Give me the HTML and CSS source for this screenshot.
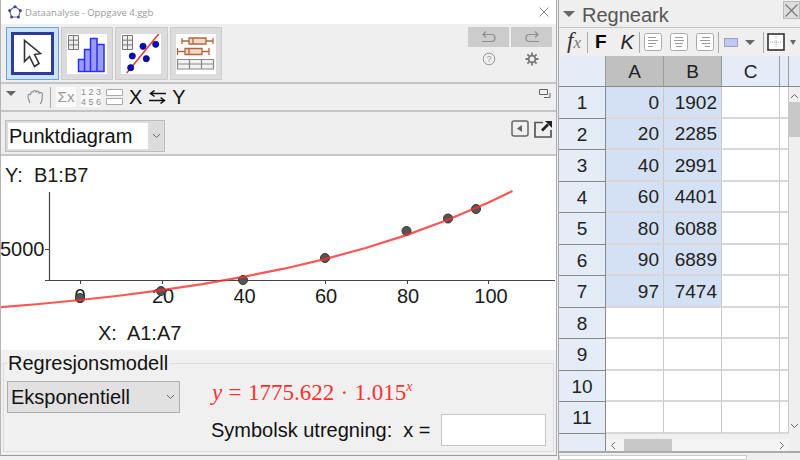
FILE: index.html
```html
<!DOCTYPE html>
<html lang="en">
  <head>
    <meta charset="utf-8">
    <title>Dataanalyse - Oppgave 4.ggb</title>
    <link rel="stylesheet" href="styles.css">
  </head>
  <body>
    <div class="desktop">
      <div class="analysis">
        <div class="titlebar">
          <svg class="logo" width="14" height="14" viewBox="0 0 14 14">
            <path d="M7 1.500 12.500 5.500 10.500 12 3.500 12 1.500 5.500Z" fill="none" stroke="#6b6f9e" stroke-width="1.200"/>
            <circle cx="7" cy="1.800" r="1.500" fill="#3f4482"/><circle cx="12.300" cy="5.500" r="1.500" fill="#3f4482"/>
            <circle cx="10.400" cy="12" r="1.500" fill="#3f4482"/><circle cx="3.600" cy="12" r="1.500" fill="#3f4482"/>
            <circle cx="1.700" cy="5.500" r="1.500" fill="#3f4482"/>
          </svg>
          <span class="title-text">Dataanalyse - Oppgave 4.ggb</span>
          <svg class="title-close" width="10" height="10" viewBox="0 0 10 10"><path d="M.5.5 9.500 9.500M9.500.5.5 9.500" stroke="#8a8a8a" fill="none"/></svg>
        </div>

        <div class="toolbar">
          <div class="tool tool-active">
            <div class="tool-frame">
              <svg width="36" height="36" viewBox="0 0 36 36"><path d="M10.500 4.500V25.500L15.500 20.500 20.500 30.500 25 27.500 20.500 18.500 26.500 17.500Z" fill="#fff" stroke="#333" stroke-width="1.600"/></svg>
            </div>
          </div>
          <div class="tool">
            <svg class="tool-icon" width="40" height="40" viewBox="0 0 40 40">
              <path d="M1.500 1.500H11.500V15.500H1.500ZM6.500 1.500V15.500M1.500 6.200H11.500M1.500 10.900H11.500" fill="#eee" stroke="#777"/>
              <path d="M11.500 25.500H17.500V37.500H11.500ZM17.500 15.500H23.500V37.500H17.500ZM23.500 4.500H30V37.500H23.500ZM30 10.500H37V37.500H30Z" fill="#9a9cf5" stroke="#2a30f0" stroke-width="1.500"/>
            </svg>
          </div>
          <div class="tool">
            <svg class="tool-icon" width="40" height="40" viewBox="0 0 40 40">
              <path d="M1.500 1.500H11.500V15.500H1.500ZM6.500 1.500V15.500M1.500 6.200H11.500M1.500 10.900H11.500" fill="#eee" stroke="#777"/>
              <path d="M5.700 39 37.700 0" stroke="#ee3333" stroke-width="1.500"/>
              <g fill="#0707d0" stroke="#111144" stroke-width=".8">
                <circle cx="9.700" cy="33.700" r="3.100"/><circle cx="11.300" cy="22" r="3.100"/>
                <circle cx="22" cy="12.300" r="3.100"/><circle cx="25.300" cy="24.700" r="3.100"/>
                <circle cx="34.700" cy="10.300" r="3.100"/>
              </g>
            </svg>
          </div>
          <div class="tool">
            <svg class="tool-icon" width="40" height="40" viewBox="0 0 40 40">
              <g fill="#eedacd" stroke="#b5653a" stroke-width="1.300">
                <path d="M6 4V10M6 7H13M30 7H37M37 4V10"/>
                <path d="M13 4H30V10H13ZM17 4V10"/>
                <path d="M1.500 14V21M1.500 17.500H9M26 17.500H33M33 14V21"/>
                <path d="M9 14.500H26V20.500H9ZM13 14.500V20.500"/>
              </g>
              <path d="M1.500 25.500H37.500V35H1.500ZM1.500 30H37.500M13.500 25.500V35M25.500 25.500V35" fill="#f2f2f2" stroke="#888" stroke-width="1.200"/>
            </svg>
          </div>
          <div class="undo-group">
            <div class="undo-row">
              <div class="undo-btn">
                <svg width="16" height="14" viewBox="0 0 16 14"><path d="M1 11.500H10.500A3.500 3.500 0 0 0 10.500 4.500H2M5 1.500 2 4.500 5 7.500" fill="none" stroke="#8e8e8e" stroke-width="1.200"/></svg>
              </div>
              <div class="undo-btn">
                <svg width="16" height="14" viewBox="0 0 16 14"><path d="M15 11.500H5.500A3.500 3.500 0 0 1 5.500 4.500H14M11 1.500 14 4.500 11 7.500" fill="none" stroke="#8e8e8e" stroke-width="1.200"/></svg>
              </div>
            </div>
            <div class="undo-row">
              <div class="undo-sub">
                <svg width="14" height="14" viewBox="0 0 14 14"><circle cx="7" cy="7" r="5.800" fill="none" stroke="#999"/><text x="7" y="10.200" class="help-mark">?</text></svg>
              </div>
              <div class="undo-sub">
                <svg width="14" height="14" viewBox="0 0 14 14"><circle cx="7" cy="7" r="3.400" fill="none" stroke="#777" stroke-width="1.800"/><path d="M7 .5V3M7 11V13.500M.5 7H3M11 7H13.500M2.400 2.400 4.200 4.200M9.800 9.800 11.600 11.600M2.400 11.600 4.200 9.800M9.800 4.200 11.600 2.400" stroke="#777" stroke-width="1.800"/></svg>
              </div>
            </div>
          </div>
        </div>

        <div class="optionbar">
          <span class="tri-down"></span>
          <svg class="opt-hand" width="18" height="16" viewBox="0 0 18 16"><path d="M3 14C2 11 .5 8 1 6.500 1.500 5 3 5 3.500 6 3.500 3.500 5 2 6 3 6.500 1 8.500 1 9 3 10 1.500 12 2 12 4 13 3 15.500 3.500 15.500 5.500L15 11 13.500 15" fill="none" stroke="#888" stroke-width="1.100"/></svg>
          <span class="opt-sep"></span>
          <span class="opt-sum">&Sigma;x</span>
          <span class="opt-nums">1 2 3<br>4 5 6</span>
          <svg class="opt-rows" width="19" height="18" viewBox="0 0 19 18"><path d="M1.500 1.500H17.500V7.500H1.500ZM1.500 10.500H17.500V16.500H1.500Z" fill="#fff" stroke="#aaa"/></svg>
          <span class="opt-xy">X</span>
          <svg class="opt-swap" width="17" height="14" viewBox="0 0 17 14"><path d="M17 3.500H2M5.500 .5 1.500 3.500 5.500 6.500M0 10.500H15M11.500 7.500 15.500 10.500 11.500 13.500" fill="none" stroke="#111" stroke-width="1.500"/></svg>
          <span class="opt-xy">Y</span>
          <svg class="opt-detach" width="12" height="10" viewBox="0 0 12 10"><path d="M.5.5H8.500V5.500H.5Z" fill="none" stroke="#666"/><path d="M11 4V8.500H5" fill="none" stroke="#666"/></svg>
        </div>

        <div class="chartbar">
          <div class="combo">
            <span class="combo-value">Punktdiagram</span>
            <span class="combo-arrow"><svg width="9" height="6" viewBox="0 0 9 6"><path d="M1 1 4.500 4.500 8 1" fill="none" stroke="#666"/></svg></span>
          </div>
          <div class="chart-actions">
            <svg width="18" height="17" viewBox="0 0 18 17"><rect x="1" y="1" width="16" height="15" rx="2" fill="#f0f0f0" stroke="#666" stroke-width="1.500"/><path d="M11 5V12L6 8.500Z" fill="#666"/></svg>
            <svg width="19" height="18" viewBox="0 0 19 18"><path d="M9 2.500H1V17H17V10" fill="none" stroke="#555" stroke-width="1.700"/><path d="M8 10.500 14 4.500" stroke="#222" stroke-width="2.600"/><path d="M11 1H18V8Z" fill="#222"/></svg>
          </div>
        </div>

        <svg class="plot" width="555" height="194" viewBox="1 156 555 194">
          <text x="5" y="182" class="plot-label">Y:&nbsp; B1:B7</text>
          <path d="M49.500 192V280.500M45 280.500H555M45 249.500H49.500" fill="none" stroke="#444" stroke-width="1.200"/>
          <path d="M80.500 280V284M162.500 280V284M244.500 280V284M325.500 280V284M407.500 280V284M488.500 280V284" stroke="#444"/>
          <text x="0" y="256" class="plot-label">5000</text>
          <text x="80" y="303" class="tick">0</text>
          <text x="163" y="303" class="tick">20</text>
          <text x="244.500" y="303" class="tick">40</text>
          <text x="326" y="303" class="tick">60</text>
          <text x="408" y="303" class="tick">80</text>
          <text x="491" y="303" class="tick">100</text>
          <g fill="#555" stroke="#333">
            <circle cx="80" cy="298" r="4.500"/><circle cx="161" cy="291" r="4.500"/>
            <circle cx="243" cy="280" r="4.500"/><circle cx="325" cy="258" r="4.500"/>
            <circle cx="406.500" cy="231" r="4.500"/><circle cx="448" cy="218.500" r="4.500"/>
            <circle cx="476" cy="209" r="4.500"/>
          </g>
          <polyline class="curve" points="0,307.200 39.200,304 80,300 120.800,295.500 161.600,290.200 202.400,284.100 243.200,276.900 284,268.700 324.800,259.100 365.600,248 406.400,235.100 447.200,220.100 488,202.700 512.500,191"/>
          <text x="98" y="340" class="plot-label">X:&nbsp; A1:A7</text>
        </svg>

        <fieldset class="model">
          <legend>Regresjonsmodell</legend>
          <div class="model-grid">
            <div class="model-select">
              <span>Eksponentiell</span>
              <svg width="9" height="6" viewBox="0 0 9 6"><path d="M1 1 4.500 4.500 8 1" fill="none" stroke="#666"/></svg>
            </div>
            <div class="formula"><i>y</i> = 1775.622 &middot; 1.015<sup>x</sup></div>
            <div class="symbolic">
              <span>Symbolsk utregning:&nbsp; x =</span>
              <div class="symbolic-input"></div>
            </div>
          </div>
        </fieldset>
      </div>

      <div class="sheet">
        <div class="sheet-head">
          <span class="tri-down tri-head"></span>
          <span class="sheet-title">Regneark</span>
          <div class="sheet-close"><svg width="13" height="13" viewBox="0 0 13 13"><path d="M.5.5 12.500 12.500M12.500.5.5 12.500" stroke="#777" fill="none" stroke-width="1.200"/></svg></div>
        </div>
        <div class="sheet-tools">
          <span class="fx"><i>f</i><i class="fx-x">x</i></span>
          <span class="tool-sep"></span>
          <b class="bold-btn">F</b>
          <i class="ital-btn">K</i>
          <span class="tool-sep"></span>
          <svg class="align" width="18" height="18" viewBox="0 0 18 18"><rect x=".5" y=".5" width="17" height="17" rx="2" fill="#fff" stroke="#aaa"/><path d="M4 4.500H12M4 7.500H14M4 10.500H12M4 13.500H9" stroke="#999"/></svg>
          <svg class="align" width="18" height="18" viewBox="0 0 18 18"><rect x=".5" y=".5" width="17" height="17" rx="2" fill="#fff" stroke="#aaa"/><path d="M5 4.500H13M4 7.500H14M5 10.500H13M6 13.500H12" stroke="#999"/></svg>
          <svg class="align" width="18" height="18" viewBox="0 0 18 18"><rect x=".5" y=".5" width="17" height="17" rx="2" fill="#fff" stroke="#aaa"/><path d="M6 4.500H14M4 7.500H14M6 10.500H14M9 13.500H14" stroke="#999"/></svg>
          <span class="tool-sep"></span>
          <span class="swatch"></span>
          <span class="tri-small"></span>
          <span class="tool-sep"></span>
          <svg class="border-btn" width="18" height="18" viewBox="0 0 18 18"><rect x="1" y="1" width="16" height="16" fill="#fff" stroke="#333" stroke-width="1.600"/><path d="M9 3V15M3 9H15" stroke="#aaa" stroke-dasharray="1 1"/></svg>
          <span class="tri-tiny"></span>
        </div>
        <div class="sheet-body">
          <div class="grid">
            <div class="head corner"></div><div class="head sel">A</div><div class="head sel">B</div><div class="head">C</div><div class="head"></div>
            <div class="row-no">1</div><div class="cell hit">0</div><div class="cell hit">1902</div><div class="cell"></div><div class="cell"></div>
            <div class="row-no">2</div><div class="cell hit">20</div><div class="cell hit">2285</div><div class="cell"></div><div class="cell"></div>
            <div class="row-no">3</div><div class="cell hit">40</div><div class="cell hit">2991</div><div class="cell"></div><div class="cell"></div>
            <div class="row-no">4</div><div class="cell hit">60</div><div class="cell hit">4401</div><div class="cell"></div><div class="cell"></div>
            <div class="row-no">5</div><div class="cell hit">80</div><div class="cell hit">6088</div><div class="cell"></div><div class="cell"></div>
            <div class="row-no">6</div><div class="cell hit">90</div><div class="cell hit">6889</div><div class="cell"></div><div class="cell"></div>
            <div class="row-no">7</div><div class="cell hit">97</div><div class="cell hit">7474</div><div class="cell"></div><div class="cell"></div>
            <div class="row-no">8</div><div class="cell"></div><div class="cell"></div><div class="cell"></div><div class="cell"></div>
            <div class="row-no">9</div><div class="cell"></div><div class="cell"></div><div class="cell"></div><div class="cell"></div>
            <div class="row-no">10</div><div class="cell"></div><div class="cell"></div><div class="cell"></div><div class="cell"></div>
            <div class="row-no">11</div><div class="cell"></div><div class="cell"></div><div class="cell"></div><div class="cell"></div>
          </div>
          <div class="vscroll">
            <div class="vhead"></div>
            <svg class="vup" width="9" height="6" viewBox="0 0 9 6"><path d="M1 5 4.500 1.500 8 5" fill="none" stroke="#666"/></svg>
            <div class="vthumb"></div>
            <svg class="vdown" width="9" height="6" viewBox="0 0 9 6"><path d="M1 1 4.500 4.500 8 1" fill="none" stroke="#666"/></svg>
          </div>
        </div>
        <div class="sheet-foot">
          <div class="foot-corner"></div>
          <div class="hscroll">
            <svg width="6" height="9" viewBox="0 0 6 9"><path d="M5 1 1.500 4.500 5 8" fill="none" stroke="#666"/></svg>
            <div class="hthumb"></div>
            <svg class="hright" width="6" height="9" viewBox="0 0 6 9"><path d="M1 1 4.500 4.500 1 8" fill="none" stroke="#666"/></svg>
          </div>
        </div>
        <div class="inputbar"></div>
      </div>
    </div>
  </body>
</html>
```

FILE: styles.css
```css
html, body {
  margin: 0;
  width: 800px;
  height: 460px;
  overflow: hidden;
  background: #f0f0f0;
}

* {
  box-sizing: border-box;
}

.desktop {
  display: flex;
  width: 800px;
  height: 460px;
  font-family: "Liberation Sans", Arial, sans-serif;
  color: #111;
}

/* venstre vindu */
.analysis {
  width: 557px;
  height: 456px;
  border-left: 1px solid #b4b4b4;
  border-right: 1px solid #aaa;
  border-bottom: 1px solid #999;
  background: #f0f0f0;
  display: flex;
  flex-direction: column;
}

.titlebar {
  display: flex;
  align-items: center;
  height: 24px;
  padding: 0 7px 0 7px;
  background: #fff;
}

.title-text {
  margin-left: 3px;
  font-family: "Open Sans", sans-serif;
  font-size: 9.500px;
  color: #9a9a9a;
}

.title-close {
  margin-left: auto;
}

.toolbar {
  display: flex;
  height: 60px;
  padding: 3px 4px 0 5px;
  border-bottom: 2px solid #c4c4c4;
  background: #efefef;
}

.tool {
  display: flex;
  align-items: center;
  justify-content: center;
  width: 52.500px;
  height: 53px;
  margin-right: 2px;
  background: #dcdcdc;
  border: 1px solid #cbcbcb;
}

.tool-icon {
  background: #fff;
}

.tool-active {
  background: #cce4f7;
  border-color: #6fa3d0;
}

.tool-frame {
  display: flex;
  align-items: center;
  justify-content: center;
  width: 43px;
  height: 43px;
  background: #fff;
  border: 3px solid #2f3a9e;
}

.undo-group {
  margin-left: auto;
  width: 84px;
}

.undo-row {
  display: flex;
  gap: 2px;
}

.undo-btn {
  display: flex;
  align-items: center;
  justify-content: center;
  width: 41px;
  height: 20px;
  background: #cccccc;
}

.undo-sub {
  display: flex;
  align-items: center;
  justify-content: center;
  width: 41px;
  height: 24px;
}

.help-mark {
  font-size: 9px;
  fill: #999;
  text-anchor: middle;
}

.optionbar {
  display: flex;
  align-items: center;
  height: 28px;
  padding: 0 5px;
  border-bottom: 2px solid #c4c4c4;
  background: #efefef;
}

.tri-down {
  width: 0;
  height: 0;
  margin-bottom: 8px;
  border-left: 5px solid transparent;
  border-right: 5px solid transparent;
  border-top: 5px solid #666;
}

.opt-hand {
  margin-left: 11px;
}

.opt-sep {
  width: 1px;
  height: 21px;
  margin-left: 5px;
  background: #aaa;
}

.opt-sum {
  width: 20px;
  margin-left: 5px;
  font-size: 15px;
  background: #fafafa;
  color: #999;
  text-align: center;
  line-height: 20px;
}

.opt-nums {
  width: 20px;
  margin-left: 5px;
  font-size: 9px;
  line-height: 10px;
  background: #fafafa;
  color: #8a8a8a;
  text-align: center;
  white-space: nowrap;
}

.opt-rows {
  margin-left: 4px;
}

.opt-xy {
  margin-left: 5px;
  font-size: 20px;
  line-height: 20px;
  color: #111;
}

.opt-swap {
  margin-left: 7px;
  margin-right: 1px;
}

.opt-detach {
  margin-left: auto;
  margin-bottom: 6px;
}

.chartbar {
  display: flex;
  height: 44px;
  padding: 8px 3px 0 4px;
  border-bottom: 2px solid #c8c8c8;
  background: #efefef;
}

.combo {
  display: flex;
  width: 160px;
  height: 32px;
  background: #dcdcdc;
  border: 1px solid #bcbcbc;
  padding: 2px 0 2px 2px;
}

.combo-value {
  width: 140px;
  padding-left: 1px;
  background: #fff;
  font-size: 20px;
  line-height: 26px;
}

.combo-arrow {
  display: flex;
  flex: 1;
  align-items: center;
  justify-content: center;
}

.chart-actions {
  display: flex;
  gap: 5px;
  margin-left: auto;
  height: 18px;
}

.plot {
  display: block;
  flex: none;
  background: #fff;
}

.plot-label,
.tick {
  font-size: 20px;
  font-family: "Liberation Sans", Arial, sans-serif;
  fill: #1a1a1a;
}

.tick {
  text-anchor: middle;
}

.curve {
  fill: none;
  stroke: #ff2a2a;
  stroke-width: 2.200;
  stroke-opacity: .8;
}

.model {
  flex: 1;
  margin: 3px 2px 3px 2px;
  padding: 0 0 0 3px;
  min-width: 0;
  border: 1px solid #dcdcdc;
}

.model legend {
  padding: 0 2px 0 1px;
  margin-left: 0;
  font-size: 20px;
  line-height: 20px;
}

.model-grid {
  display: grid;
  grid-template-columns: 173px 1fr;
  column-gap: 31px;
  padding-top: 8px;
}

.model-select {
  display: flex;
  align-items: center;
  justify-content: space-between;
  height: 32px;
  padding: 0 4px 0 3px;
  background: #e1e1e1;
  border: 1px solid #adadad;
  font-size: 20px;
}

.formula {
  height: 32px;
  padding-left: 1px;
  font-family: "Liberation Serif", serif;
  font-size: 23px;
  line-height: 24px;
  word-spacing: .6px;
  color: #ff3030;
  white-space: nowrap;
}

.formula sup {
  font-size: 14px;
  font-style: italic;
  line-height: 0;
}

.symbolic {
  grid-column: 2;
  display: flex;
  align-items: center;
  margin-top: 1px;
  font-size: 20px;
}

.symbolic-input {
  width: 105px;
  height: 32px;
  margin-left: 10px;
  background: #fff;
  border: 1px solid #c6c6c6;
}

/* regneark */
.sheet {
  flex: 1;
  margin-left: 1px;
  height: 460px;
  border-left: 1px solid #a8a8a8;
  background: #efefef;
  display: flex;
  flex-direction: column;
}

.sheet-head {
  display: flex;
  align-items: center;
  height: 28px;
  padding-left: 4px;
  border-bottom: 1px solid #c4c4c4;
}

.tri-head {
  margin: 0;
  border-left-width: 6px;
  border-right-width: 6px;
  border-top-width: 6px;
}

.sheet-title {
  margin-left: 7px;
  padding-top: 3px;
  font-size: 20px;
  color: #555;
}

.sheet-close {
  display: flex;
  align-items: center;
  justify-content: center;
  width: 17px;
  height: 18px;
  margin-left: auto;
  margin-bottom: 7px;
  background: #dedede;
  border: 1px solid #bbb;
}

.sheet-tools {
  display: flex;
  align-items: center;
  height: 28px;
  padding-left: 8px;
}

.fx {
  width: 20px;
  font-family: "Liberation Serif", serif;
  font-size: 23px;
  line-height: 22px;
  color: #333;
  white-space: nowrap;
}

.fx-x {
  font-size: 17px;
  color: #777;
}

.tool-sep {
  width: 1px;
  height: 21px;
  margin-left: 0;
  background: #aaa;
}

.bold-btn {
  margin-left: 7px;
  font-size: 19px;
  color: #000;
}

.ital-btn {
  margin-left: 14px;
  font-size: 20px;
  color: #222;
}

.ital-btn + .tool-sep {
  margin-left: 5px;
}

.align {
  margin-left: 4px;
  margin-right: 4px;
}

.swatch {
  width: 14px;
  height: 9px;
  margin-left: 5px;
  background: #c3c8f0;
  border: 1px solid #9aa0c8;
}

.tri-small {
  width: 0;
  height: 0;
  margin-left: 7px;
  border-left: 5.500px solid transparent;
  border-right: 5.500px solid transparent;
  border-top: 5px solid #666;
}

.tri-small + .tool-sep {
  margin-left: 8px;
}

.border-btn {
  margin-left: 3px;
}

.tri-tiny {
  width: 0;
  height: 0;
  margin-left: 5px;
  border-left: 3.500px solid transparent;
  border-right: 3.500px solid transparent;
  border-top: 5px solid #666;
}

.sheet-body {
  display: flex;
  height: 378px;
  background: #fff;
}

.grid {
  display: grid;
  grid-template-columns: 47px 58px 58px 58px 9px;
  grid-template-rows: 31px repeat(11, 31.500px);
  flex: none;
  height: 378px;
  background: #fff;
}

.head,
.row-no {
  display: flex;
  align-items: center;
  justify-content: center;
  padding-top: 2px;
  background: #e4ecf7;
  font-size: 19px;
  color: #222;
}

.head {
  border-right: 1px solid #999;
  border-bottom: 1px solid #888;
}

.head.sel {
  background: #c0c0c0;
}

.row-no {
  border-right: 1px solid #888;
  border-bottom: 1px solid #888;
}

.cell {
  display: flex;
  align-items: center;
  justify-content: flex-end;
  padding: 2px 4px 0 0;
  border-right: 1px solid #c8c8c8;
  border-bottom: 2px solid #d8d8d8;
  font-size: 19px;
  color: #222;
}

.hit {
  background: #d4e0f4;
}

.vscroll {
  flex: 1;
  display: flex;
  flex-direction: column;
  align-items: center;
  background: #efefef;
}

.vhead {
  width: 100%;
  height: 31px;
  background: #e4ecf7;
  border-bottom: 1px solid #888;
}

.vup {
  margin-top: 6px;
}

.vthumb {
  width: 100%;
  height: 35px;
  margin-top: 3px;
  background: #c8c8c8;
}

.vdown {
  margin-top: auto;
  margin-bottom: 5px;
}

.sheet-foot {
  display: flex;
  height: 19px;
  border-bottom: 2px solid #aaa;
}

.foot-corner {
  width: 47px;
  background: #e4ecf7;
  border-right: 1px solid #888;
}

.hscroll {
  display: flex;
  align-items: center;
  width: 183px;
  margin-top: 5px;
  padding: 0 4px;
  background: #f4f4f4;
}

.hthumb {
  width: 48px;
  height: 100%;
  margin-left: 8px;
  background: #c8c8c8;
}

.hright {
  margin-left: auto;
}

.inputbar {
  width: 188px;
  flex: 1;
  margin-top: 2px;
  background: #fff;
  border: 1px solid #ccc;
}
```
